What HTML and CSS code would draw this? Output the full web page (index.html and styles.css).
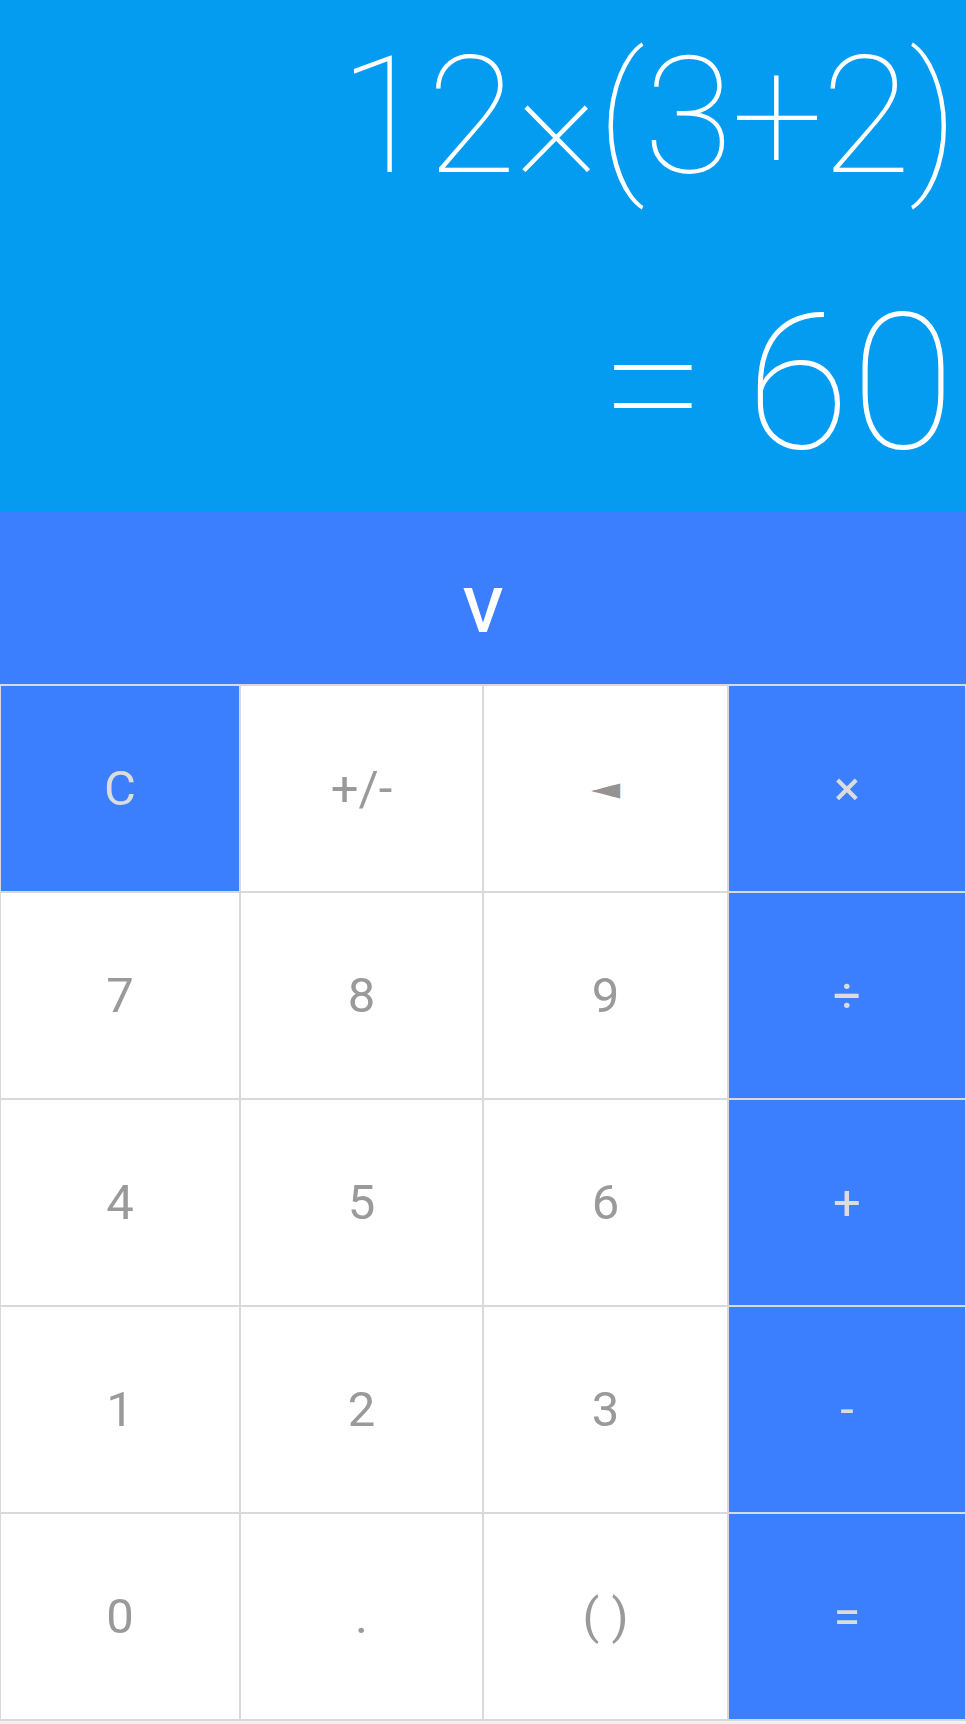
FILE: index.html
```html
<!DOCTYPE html>
<html lang="en">
<head>
<meta charset="utf-8">
<title>Calculator</title>
<link rel="stylesheet" href="styles.css">
</head>
<body>
<div class="app">
  <section class="display">
    <div class="expression">12×(3+2)</div>
    <div class="result">= 60</div>
  </section>
  <div class="toggle">V</div>
  <div class="keys">
    <div class="key op">C</div>
    <div class="key">+/-</div>
    <div class="key back"><span class="back-glyph">◄</span></div>
    <div class="key op">×</div>

    <div class="key">7</div>
    <div class="key">8</div>
    <div class="key">9</div>
    <div class="key op">÷</div>

    <div class="key">4</div>
    <div class="key">5</div>
    <div class="key">6</div>
    <div class="key op">+</div>

    <div class="key">1</div>
    <div class="key">2</div>
    <div class="key">3</div>
    <div class="key op">-</div>

    <div class="key">0</div>
    <div class="key">.</div>
    <div class="key">( )</div>
    <div class="key op">=</div>
  </div>
</div>
</body>
</html>
```
FILE: styles.css
```css
html, body {
  margin: 0;
  padding: 0;
}
body {
  background: #f0f0f0;
  font-family: Roboto, "Liberation Sans", sans-serif;
  width: 966px;
  height: 1724px;
  overflow: hidden;
}
.app {
  display: flex;
  flex-direction: column;
}
.display {
  height: 511px;
  box-sizing: border-box;
  background: #049cf1;
  color: #ffffff;
  display: flex;
  flex-direction: column;
  align-items: flex-end;
  padding: 34px 0 0 0;
  font-weight: 100;
}
.expression {
  font-size: 164px;
  line-height: 164px;
  letter-spacing: -2px;
  padding-right: 9px;
  white-space: nowrap;
}
.result {
  margin-top: 90px;
  font-size: 190px;
  line-height: 190px;
  word-spacing: -8px;
  letter-spacing: 1px;
  padding-right: 10px;
  white-space: nowrap;
}
.toggle {
  height: 173px;
  box-sizing: border-box;
  background: #3b7fff;
  color: #ffffff;
  display: flex;
  align-items: center;
  justify-content: center;
  padding-top: 26px;
  font-size: 62px;
  font-weight: 500;
}
.keys {
  display: grid;
  grid-template-columns: 238px 241px 243px 236px;
  grid-auto-rows: 205px;
  gap: 2px;
  padding: 2px 1px 2px 1px;
  background: #d9d9d9;
}
.key {
  background: #ffffff;
  color: #9a9a9a;
  display: flex;
  align-items: center;
  justify-content: center;
  font-size: 49px;
  font-weight: 400;
}
.key.op {
  background: #3b7fff;
  color: #dcdcdc;
}
.key.back {
  font-family: "DejaVu Sans", sans-serif;
  font-size: 38px;
  color: #939393;
}
.back-glyph {
  display: inline-block;
  transform: scaleY(0.8);
}
```
